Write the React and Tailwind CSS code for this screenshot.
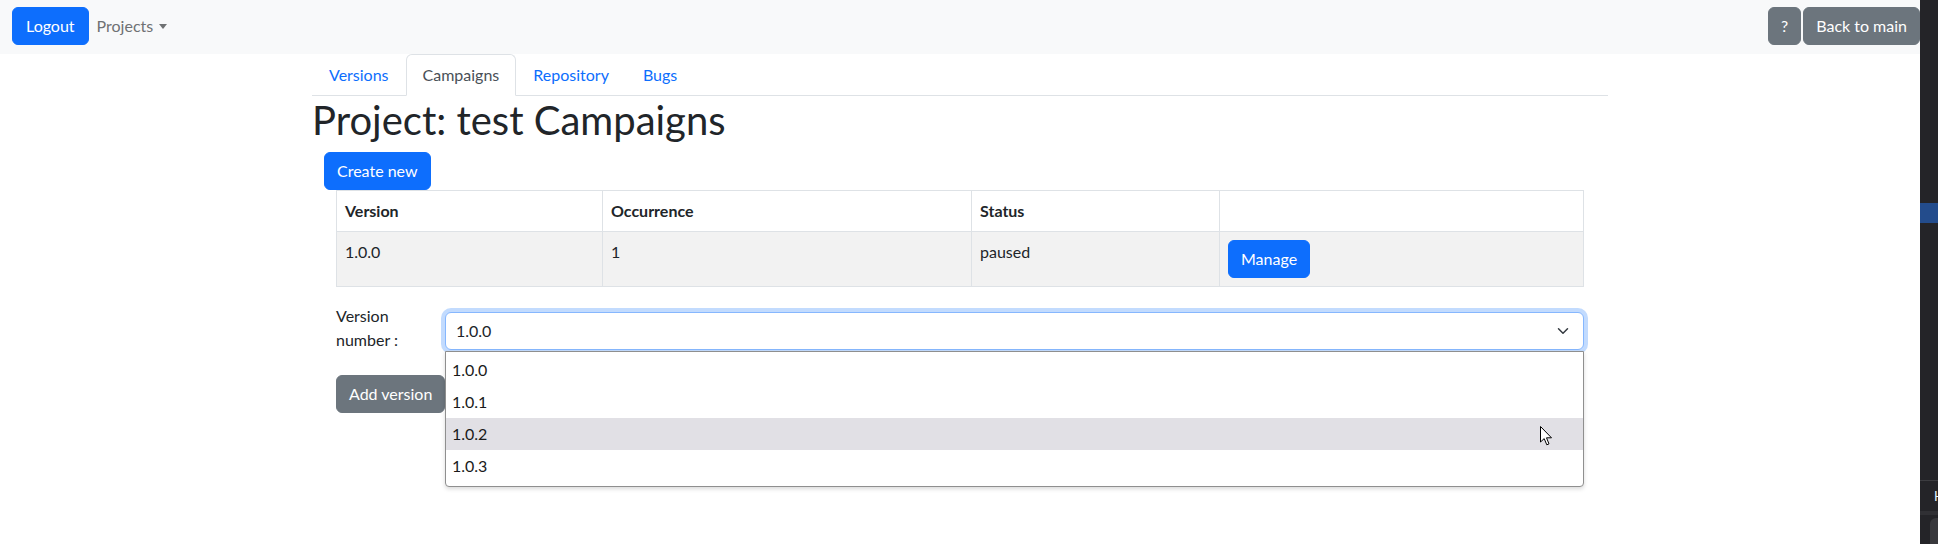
import React from 'react'

const font = { fontFamily: 'Lato, "Liberation Sans", Arial, sans-serif' }

function Tab({ label, active }) {
  return (
    <li className="-mb-px">
      <a
        className={[
          'block px-4 py-2 leading-6 border rounded-t-md',
          active ? 'border-[#dee2e6] border-b-white bg-white text-[#495057]' : 'border-transparent text-[#0d6efd]',
        ].join(' ')}
      >
        {label}
      </a>
    </li>
  )
}

function Btn({ children, variant = 'primary', className = '' }) {
  return (
    <button
      className={[
        'inline-block px-3 py-[6px] leading-6 text-base rounded-md border text-white',
        variant === 'primary' ? 'bg-[#0d6efd] border-[#0d6efd]' : 'bg-[#6c757d] border-[#6c757d]',
        className,
      ].join(' ')}
    >
      {children}
    </button>
  )
}

function Cursor() {
  return (
    <svg className="absolute left-[1540px] top-[426px] z-30" width="13" height="20" viewBox="0 0 13 20">
      <path d="M0.5 0.5 L0.5 16 L4.2 12.6 L6.8 18.8 L9 17.9 L6.5 11.8 L11.5 11.8 Z" fill="#fff" stroke="#000" strokeWidth="1" strokeLinejoin="round" />
    </svg>
  )
}

export default function App() {
  const options = ['1.0.0', '1.0.1', '1.0.2', '1.0.3']
  const cell = 'border border-[#dee2e6] px-2 py-2 text-left align-top leading-6'

  return (
    <div className="relative flex w-full h-[544px] overflow-hidden bg-white text-[#212529] text-base" style={font}>
      <div className="w-[1920px] shrink-0 flex flex-col">
        {/* Navbar */}
        <nav className="h-[54px] bg-[#f8f9fa] flex items-start justify-between pt-[7px] pl-3">
          <div className="flex items-center">
            <Btn className="px-[13px]">Logout</Btn>
            <a className="flex items-center pl-2 text-[#6f7173] leading-6">
              Projects
              <span className="ml-[6px] w-0 h-0 border-x-[4.5px] border-x-transparent border-t-[5px] border-t-[#6f7173]" />
            </a>
          </div>
          <div className="flex gap-[2px]">
            <Btn variant="secondary">?</Btn>
            <Btn variant="secondary">Back to main</Btn>
          </div>
        </nav>

        <div className="w-[1296px] mx-auto">
          <ul className="flex border-b border-[#dee2e6]">
            <Tab label="Versions" />
            <Tab label="Campaigns" active />
            <Tab label="Repository" />
            <Tab label="Bugs" />
          </ul>

          <h1 className="text-[40px] leading-[48px] font-normal mb-2">Project: test Campaigns</h1>

          <Btn className="ml-3">Create new</Btn>

          <div className="mx-6">
            <table className="w-full table-fixed border-collapse">
              <colgroup>
                <col className="w-[266px]" />
                <col className="w-[369px]" />
                <col className="w-[248px]" />
                <col />
              </colgroup>
              <thead>
                <tr>
                  {['Version', 'Occurrence', 'Status', ''].map((h, i) => (
                    <th key={i} className={cell + ' font-bold'}>{h}</th>
                  ))}
                </tr>
              </thead>
              <tbody>
                <tr className="bg-[#f2f2f2]">
                  <td className={cell}>1.0.0</td>
                  <td className={cell}>1</td>
                  <td className={cell}>paused</td>
                  <td className={cell}><Btn>Manage</Btn></td>
                </tr>
              </tbody>
            </table>
          </div>

          {/* Add version form */}
          <div className="mx-6 mt-[17px]">
            <div className="flex">
              <label className="w-[109px] leading-6 shrink-0">Version<br />number :</label>
              <div className="relative flex-1 mt-[8px]">
                <div className="h-[38px] flex items-center justify-between pl-[10px] pr-3 border border-[#86b7fe] rounded-md bg-white shadow-[0_0_0_4px_rgba(13,110,253,0.25)] leading-6">
                  <span>1.0.0</span>
                  <svg width="16" height="12" viewBox="0 0 16 16" fill="none">
                    <path d="m2 5 6 6 6-6" stroke="#343a40" strokeWidth="2" strokeLinecap="round" strokeLinejoin="round" />
                  </svg>
                </div>
                <ul className="absolute left-0 right-0 top-full -mt-px z-20 bg-white border border-[#8f8f8f] rounded-b-[4px] pt-[2px] pb-[4px] shadow-[0_2px_4px_rgba(0,0,0,0.15)]">
                  {options.map(o => (
                    <li key={o} className={['h-8 flex items-center pl-[6px] text-[#1a1a1a]', o === '1.0.2' ? 'bg-[#e1e0e5]' : ''].join(' ')}>
                      {o}
                    </li>
                  ))}
                </ul>
              </div>
            </div>
            <Btn variant="secondary" className="mt-[23px]">Add version</Btn>
          </div>
        </div>
      </div>

      {/* Side panel */}
      <div className="w-[18px] shrink-0 bg-[#242428] flex flex-col">
        <div className="h-[203px]" />
        <div className="h-[20px] bg-[#234c8c]" />
        <div className="h-[257px]" />
        <div className="h-[31px] border-t border-[#3c3c40] overflow-hidden pl-[14px] text-[13px] leading-[30px] text-[#e6f4ff]">H</div>
        <div className="h-[4px] bg-[#303034]" />
        <div className="flex-1 ml-[10px] mt-[3px] rounded-tl-md bg-[#38383c]" />
      </div>

      <Cursor />
    </div>
  )
}
